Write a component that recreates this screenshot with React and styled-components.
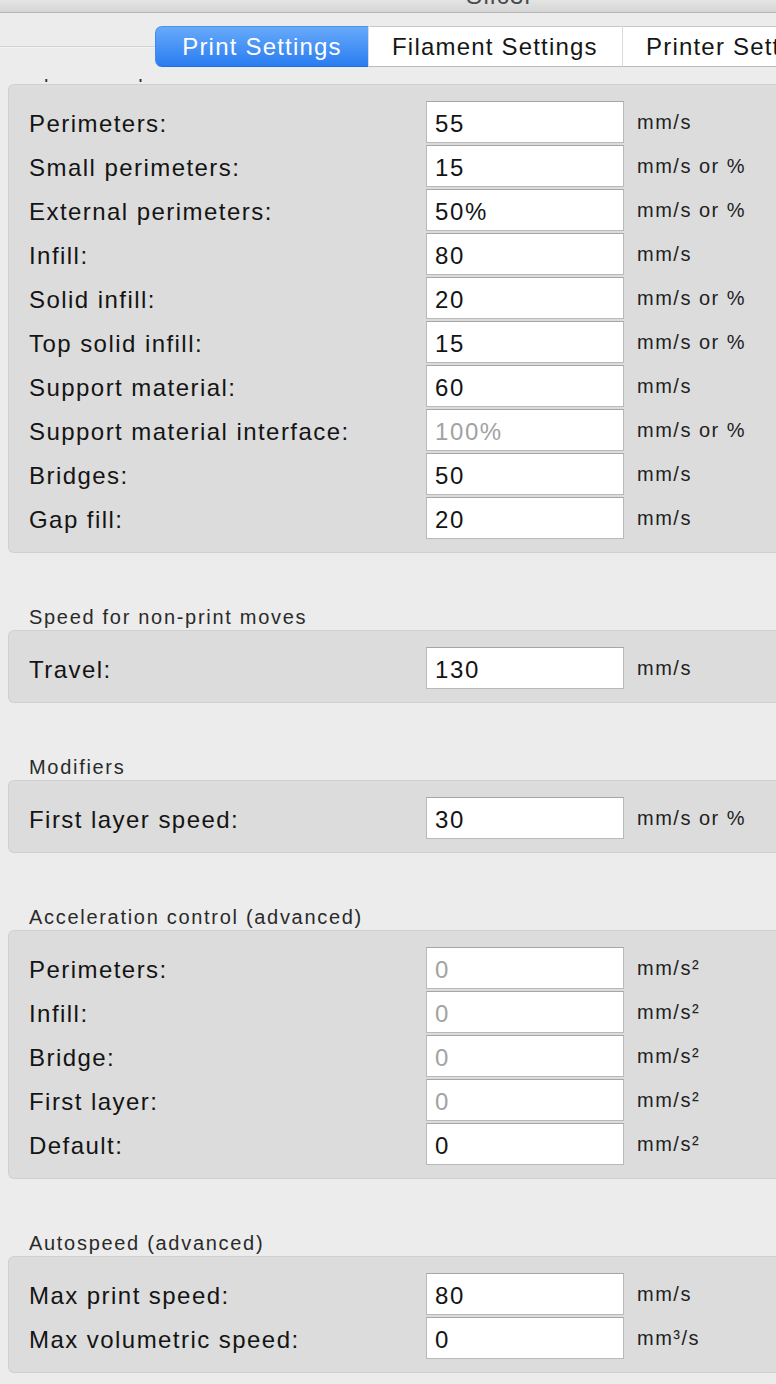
import React from "react";
import styled, { createGlobalStyle } from "styled-components";

const GlobalStyle = createGlobalStyle`
  html, body {
    margin: 0;
    padding: 0;
    background: #ececec;
    overflow: hidden;
  }
  body {
    font-family: "Liberation Sans", Arial, sans-serif;
    color: #1e1e1e;
  }
`;

const sections = [
  {
    title: "Speed for print moves",
    rows: [
      { label: "Perimeters:", value: "55", unit: "mm/s" },
      { label: "Small perimeters:", value: "15", unit: "mm/s or %" },
      { label: "External perimeters:", value: "50%", unit: "mm/s or %" },
      { label: "Infill:", value: "80", unit: "mm/s" },
      { label: "Solid infill:", value: "20", unit: "mm/s or %" },
      { label: "Top solid infill:", value: "15", unit: "mm/s or %" },
      { label: "Support material:", value: "60", unit: "mm/s" },
      { label: "Support material interface:", value: "100%", unit: "mm/s or %", dim: true },
      { label: "Bridges:", value: "50", unit: "mm/s" },
      { label: "Gap fill:", value: "20", unit: "mm/s" },
    ],
  },
  {
    title: "Speed for non-print moves",
    rows: [{ label: "Travel:", value: "130", unit: "mm/s" }],
  },
  {
    title: "Modifiers",
    rows: [{ label: "First layer speed:", value: "30", unit: "mm/s or %" }],
  },
  {
    title: "Acceleration control (advanced)",
    rows: [
      { label: "Perimeters:", value: "0", unit: "mm/s²", dim: true },
      { label: "Infill:", value: "0", unit: "mm/s²", dim: true },
      { label: "Bridge:", value: "0", unit: "mm/s²", dim: true },
      { label: "First layer:", value: "0", unit: "mm/s²", dim: true },
      { label: "Default:", value: "0", unit: "mm/s²" },
    ],
  },
  {
    title: "Autospeed (advanced)",
    rows: [
      { label: "Max print speed:", value: "80", unit: "mm/s" },
      { label: "Max volumetric speed:", value: "0", unit: "mm³/s" },
    ],
  },
];

const tabs = [
  { name: "Print Settings", width: 213, active: true },
  { name: "Filament Settings", width: 254 },
  { name: "Printer Settings", width: 240 },
];

const App = () => (
  <Window>
    <GlobalStyle />
    <TitleBar>
      <WindowTitle>Slic3r</WindowTitle>
    </TitleBar>
    <TabStrip>
      <Leader />
      {tabs.map((t, i) => (
        <Tab key={t.name} $active={t.active} $first={i === 0} $width={t.width}>
          {t.name}
        </Tab>
      ))}
    </TabStrip>
    <Viewport>
      <Content>
        {sections.map((s) => (
          <Section key={s.title}>
            <SectionTitle>{s.title}</SectionTitle>
            <Panel>
              {s.rows.map((r) => (
                <Row key={r.label}>
                  <Label>{r.label}</Label>
                  <Field readOnly value={r.value} $dim={r.dim} />
                  <Unit>{r.unit}</Unit>
                </Row>
              ))}
            </Panel>
          </Section>
        ))}
      </Content>
    </Viewport>
  </Window>
);

const Window = styled.div`
  width: 776px;
  height: 1384px;
  display: flex;
  flex-direction: column;
  overflow: hidden;
  background: #ececec;
`;

const TitleBar = styled.div`
  height: 12px;
  flex: none;
  display: flex;
  justify-content: center;
  align-items: flex-end;
  padding-left: 224px;
  overflow: hidden;
  background: linear-gradient(#e4e4e4, #d5d5d5);
  border-bottom: 1px solid #b3b3b3;
`;

const WindowTitle = styled.span`
  font-size: 24px;
  line-height: 20px;
  letter-spacing: 1.3px;
  color: #4a4a4a;
  margin-bottom: 6px;
`;

const TabStrip = styled.div`
  flex: none;
  display: flex;
  align-items: stretch;
  height: 41px;
  margin-top: 13px;
  white-space: nowrap;
`;

const Leader = styled.div`
  flex: none;
  width: 155px;
  height: 1px;
  align-self: center;
  background: #d2d2d2;
  box-shadow: 0 1px 0 #f4f4f4;
`;

const Tab = styled.div`
  flex: none;
  width: ${(p) => p.$width}px;
  box-sizing: border-box;
  display: flex;
  align-items: center;
  justify-content: ${(p) => (p.$first ? "center" : "flex-start")};
  padding-left: ${(p) => (p.$first ? 0 : 23)}px;
  font-size: 24px;
  letter-spacing: 1.2px;
  color: ${(p) => (p.$active ? "#ffffff" : "#161616")};
  background: ${(p) =>
    p.$active ? "linear-gradient(#67aafa, #2a7cf1)" : "#ffffff"};
  border-top: 1px solid ${(p) => (p.$active ? "#4a93f5" : "#c8c8c8")};
  border-bottom: 1px solid ${(p) => (p.$active ? "#1f6fe0" : "#b9b9b9")};
  border-left: 1px solid ${(p) => (p.$first ? "#3f8bf3" : "#dadada")};
  border-radius: ${(p) => (p.$first ? "7px 0 0 7px" : "0")};
`;

const Viewport = styled.div`
  margin-top: 12px;
  flex: 1;
  overflow: hidden;
`;

const Content = styled.div`
  margin-top: -21px;
  padding-left: 8px;
  width: 820px;
`;

const Section = styled.section`
  & + & {
    margin-top: 51px;
  }
`;

const SectionTitle = styled.div`
  height: 26px;
  line-height: 26px;
  padding-left: 21px;
  font-size: 20px;
  letter-spacing: 1.7px;
  color: #2a2a2a;
`;

const Panel = styled.div`
  display: flex;
  flex-direction: column;
  gap: 2px;
  padding: 16px 0 13px 20px;
  background: #dcdcdc;
  border: 1px solid #d0d0d0;
  border-right: none;
  border-radius: 6px 0 0 6px;
`;

const Row = styled.div`
  display: flex;
  align-items: center;
  height: 42px;
`;

const Label = styled.div`
  flex: none;
  width: 397px;
  padding-top: 3px;
  font-size: 24px;
  letter-spacing: 1.45px;
  color: #141414;
`;

const Field = styled.input`
  flex: none;
  box-sizing: border-box;
  width: 198px;
  height: 42px;
  margin: 0;
  padding: 4px 0 0 8px;
  font-family: "Liberation Sans", Arial, sans-serif;
  font-size: 24px;
  letter-spacing: 1.6px;
  color: ${(p) => (p.$dim ? "#a2a2a2" : "#141414")};
  background: #ffffff;
  border: 1px solid #b9b9b9;
  border-top-color: #a6a6a6;
  border-radius: 0;
  outline: none;
`;

const Unit = styled.div`
  flex: none;
  margin-left: 13px;
  margin-top: 0;
  font-size: 20px;
  letter-spacing: 1.5px;
  color: #222222;
`;

export default App;
